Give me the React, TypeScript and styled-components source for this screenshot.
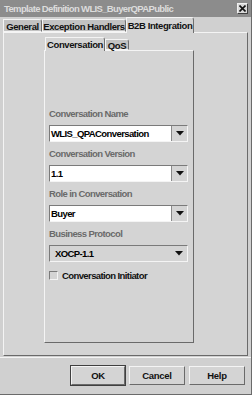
import React from 'react';
import styled, {createGlobalStyle} from 'styled-components';

const GlobalStyle = createGlobalStyle`
  html, body {
    margin: 0;
    padding: 0;
    background: #d0d0d0;
  }
  * {
    box-sizing: border-box;
  }
`;

const Window = styled.div`
  width: 252px;
  height: 395px;
  background: #d0d0d0;
  border-right: 1px solid #6a6a6a;
  border-bottom: 1px solid #6a6a6a;
  font-family: "Liberation Sans", Arial, sans-serif;
  font-weight: 700;
  font-size: 9.5px;
  letter-spacing: -0.6px;
  display: flex;
  flex-direction: column;
`;

const TitleBar = styled.div`
  height: 17px;
  background: #8c8c8c;
  color: #dcdcdc;
  display: flex;
  align-items: center;
  justify-content: space-between;
  padding: 0 3px 0 4px;
  font-size: 9.5px;
  letter-spacing: -0.65px;
  line-height: 13px;
`;

const CloseBox = styled.div`
  width: 11px;
  height: 11px;
  background: #d8d8d8;
  border: 1px solid #f0f0f0;
  border-right-color: #404040;
  border-bottom-color: #404040;
  display: flex;
  align-items: center;
  justify-content: center;
`;

const TabRow = styled.div<{ $left: number; $h: number }>`
  display: flex;
  align-items: flex-end;
  height: ${p => p.$h}px;
  padding-left: ${p => p.$left}px;
  position: relative;
  z-index: 1;
`;

const Tab = styled.div<{ $active?: boolean; $w: number; $h: number }>`
  width: ${p => p.$w}px;
  height: ${p => (p.$active ? p.$h + 1 : p.$h - 2)}px;
  margin-bottom: ${p => (p.$active ? -1 : 0)}px;
  background: ${p => (p.$active ? '#d4d4d4' : '#c2c2c2')};
  border: 1px solid #f4f4f4;
  border-right-color: #707070;
  border-bottom: ${p => (p.$active ? 'none' : '1px solid #f4f4f4')};
  border-top-right-radius: 3px;
  color: #111;
  display: flex;
  align-items: center;
  justify-content: center;
  padding-top: ${p => (p.$active ? 0 : 1)}px;
  white-space: nowrap;
  letter-spacing: -0.4px;
`;

const OuterPanel = styled.div`
  margin: 0 3px;
  height: 324px;
  border: 1px solid #f4f4f4;
  border-right-color: #6a6a6a;
  border-bottom-color: #6a6a6a;
  background: #d4d4d4;
  padding: 4px 0 0 40px;
`;

const InnerPanel = styled.div`
  width: 150px;
  height: 293px;
  border: 1px solid #f4f4f4;
  border-right-color: #6a6a6a;
  border-bottom-color: #6a6a6a;
  background: #d4d4d4;
  padding: 57px 0 0 4px;
  display: flex;
  flex-direction: column;
`;

const Field = styled.div`
  display: flex;
  flex-direction: column;
  margin-bottom: 6px;
`;

const Label = styled.div`
  color: #6a6a6a;
  height: 12px;
  line-height: 12px;
  margin-bottom: 5px;
`;

const Combo = styled.div<{ $editable?: boolean }>`
  width: 139px;
  height: 17px;
  display: flex;
  border: 1px solid #7a7a7a;
  border-right-color: #f4f4f4;
  border-bottom-color: #f4f4f4;
  background: ${p => (p.$editable ? '#ffffff' : '#d4d4d4')};
`;

const ComboText = styled.div<{ $editable?: boolean }>`
  flex: 1;
  color: #000;
  line-height: 15px;
  padding-left: ${p => (p.$editable ? 1 : 5)}px;
`;

const ArrowButton = styled.div<{ $editable?: boolean }>`
  width: 16px;
  display: flex;
  align-items: center;
  justify-content: center;
  background: #d4d4d4;
  border-left: ${p => (p.$editable ? '1px solid #8a8a8a' : 'none')};
`;

const CheckRow = styled.label`
  display: flex;
  align-items: center;
  gap: 4px;
  margin-top: 2px;
  color: #111;
`;

const CheckBox = styled.span`
  width: 9px;
  height: 9px;
  border: 1px solid #7a7a7a;
  border-right-color: #f4f4f4;
  border-bottom-color: #f4f4f4;
  background: #d4d4d4;
`;

const Footer = styled.div`
  flex: 1;
  margin-top: 1px;
  border-top: 1px solid #f4f4f4;
  display: flex;
  justify-content: flex-end;
  align-items: flex-start;
  gap: 4px;
  padding: 8px 6px 0 0;
`;

const Button = styled.div<{ $default?: boolean }>`
  width: ${p => (p.$default ? 54 : 56)}px;
  height: 19px;
  background: #d4d4d4;
  border: 1px solid #f4f4f4;
  border-right-color: #6a6a6a;
  border-bottom-color: #6a6a6a;
  outline: ${p => (p.$default ? '1px solid #404040' : 'none')};
  color: #111;
  display: flex;
  align-items: center;
  justify-content: center;
  letter-spacing: -0.3px;
`;

const Arrow = () => (
  <svg width="8" height="5" viewBox="0 0 8 5">
    <path d="M0 0H8L4 4.5Z" fill="#111"/>
  </svg>
);

const fields = [
  {label: 'Conversation Name', value: 'WLIS_QPAConversation', editable: true},
  {label: 'Conversation Version', value: '1.1', editable: true},
  {label: 'Role in Conversation', value: 'Buyer', editable: true},
  {label: 'Business Protocol', value: 'XOCP-1.1', editable: false},
];

export default function App() {
  return (
    <>
      <GlobalStyle/>
      <Window>
        <TitleBar>
          <span>Template Definition WLIS_BuyerQPAPublic</span>
          <CloseBox>
            <svg width="7" height="7" viewBox="0 0 7 7">
              <path d="M0.5 0.5L6.5 6.5M6.5 0.5L0.5 6.5" stroke="#111" strokeWidth="1.6"/>
            </svg>
          </CloseBox>
        </TitleBar>
        <TabRow $left={3} $h={15}>
          <Tab $w={39} $h={15}>General</Tab>
          <Tab $w={84} $h={15}>Exception Handlers</Tab>
          <Tab $w={68} $h={15} $active>B2B Integration</Tab>
        </TabRow>
        <OuterPanel>
          <TabRow $left={1} $h={13}>
            <Tab $w={60} $h={13} $active>Conversation</Tab>
            <Tab $w={24} $h={13}>QoS</Tab>
          </TabRow>
          <InnerPanel>
            {fields.map(f => (
              <Field key={f.label}>
                <Label>{f.label}</Label>
                <Combo $editable={f.editable}>
                  <ComboText $editable={f.editable}>{f.value}</ComboText>
                  <ArrowButton $editable={f.editable}><Arrow/></ArrowButton>
                </Combo>
              </Field>
            ))}
            <CheckRow>
              <CheckBox/>
              Conversation Initiator
            </CheckRow>
          </InnerPanel>
        </OuterPanel>
        <Footer>
          <Button $default>OK</Button>
          <Button>Cancel</Button>
          <Button>Help</Button>
        </Footer>
      </Window>
    </>
  );
}
